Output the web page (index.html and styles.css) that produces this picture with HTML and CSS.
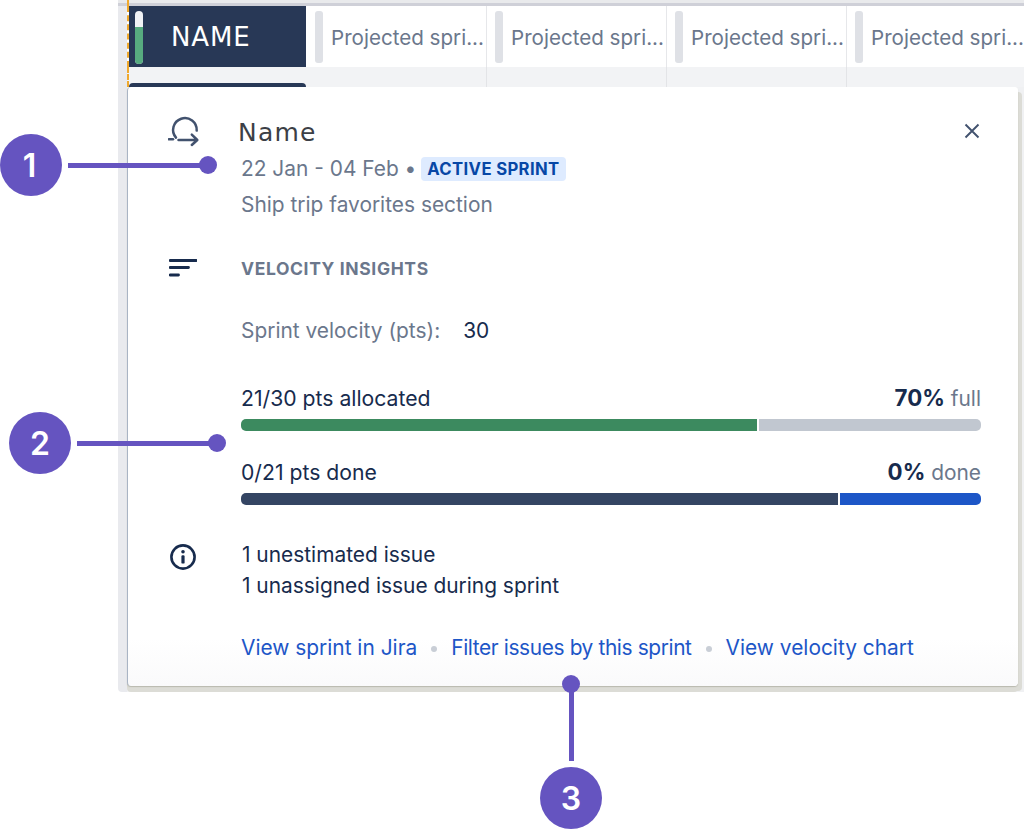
FILE: index.html
```html
<!DOCTYPE html>
<html lang="en">
<head>
<meta charset="utf-8">
<title>Sprint details</title>
<link rel="stylesheet" href="styles.css">
</head>
<body>
<div class="page">
  <div class="board">
    <div class="board-top"></div>
    <div class="row">
      <div class="cell-name">
        <span class="meter"><span class="meter-fill"></span></span>
        <span class="name-label">NAME</span>
      </div>
      <div class="cell"><span class="grip"></span><span class="cell-text">Projected spri...</span></div>
      <div class="cell"><span class="grip"></span><span class="cell-text">Projected spri...</span></div>
      <div class="cell"><span class="grip"></span><span class="cell-text">Projected spri...</span></div>
      <div class="cell cell-last"><span class="grip"></span><span class="cell-text">Projected spri...</span></div>
    </div>
    <div class="subrow">
      <div class="sub-name"><span class="next-name"></span></div>
      <div class="sub"></div>
      <div class="sub"></div>
      <div class="sub"></div>
      <div class="sub sub-last"></div>
    </div>

    <section class="popup">
      <div class="section head">
        <svg class="icon icon-sprint" viewBox="0 0 32 32" width="32" height="32" aria-hidden="true">
          <path d="M8 22.6 A11.8 11.8 0 1 1 28.7 15.6" fill="none" stroke="#42526e" stroke-width="2.5" stroke-linecap="round"/>
          <path d="M10.5 25 H29 M23.8 19.6 L29.3 25 L23.8 30" fill="none" stroke="#42526e" stroke-width="2.5" stroke-linecap="round" stroke-linejoin="round"/>
          <path d="M0.8 24.2 H5" fill="none" stroke="#42526e" stroke-width="2.5" stroke-linecap="round"/>
        </svg>
        <div class="body">
          <div class="title-row">
            <h2 class="title">Name</h2>
            <svg class="close" viewBox="0 0 16 16" width="16" height="16" aria-hidden="true">
              <path d="M1.5 1.5 L14.5 14.5 M14.5 1.5 L1.5 14.5" fill="none" stroke="#42526e" stroke-width="1.9"/>
            </svg>
          </div>
          <div class="dates">22 Jan - 04 Feb • <span class="badge">ACTIVE SPRINT</span></div>
          <div class="goal">Ship trip favorites section</div>
        </div>
      </div>

      <div class="section insights">
        <svg class="icon icon-filter" viewBox="0 0 28 20" width="28" height="20" aria-hidden="true">
          <path d="M1 1.5 H27.5 M1 8.5 H19.5 M1 16 H9.5" fill="none" stroke="#172b4d" stroke-width="2.8" stroke-linecap="round"/>
        </svg>
        <div class="body">
          <h3 class="overline">VELOCITY INSIGHTS</h3>
          <div class="velocity"><span class="muted">Sprint velocity (pts):</span><span class="velocity-value">30</span></div>
          <div class="metric metric-first">
            <div class="metric-label"><span class="metric-name">21/30 pts allocated</span><span class="muted"><b class="pct">70%</b> full</span></div>
            <div class="bar"><span class="seg seg-green"></span><span class="seg seg-grey"></span></div>
          </div>
          <div class="metric">
            <div class="metric-label"><span class="metric-name">0/21 pts done</span><span class="muted"><b class="pct">0%</b> done</span></div>
            <div class="bar"><span class="seg seg-navy"></span><span class="seg seg-blue"></span></div>
          </div>
        </div>
      </div>

      <div class="section notes">
        <svg class="icon icon-info" viewBox="0 0 28 28" width="28" height="28" aria-hidden="true">
          <circle cx="14" cy="14" r="11.6" fill="none" stroke="#172b4d" stroke-width="2.6"/>
          <circle cx="14" cy="8.8" r="1.8" fill="#172b4d"/>
          <rect x="12.4" y="12.2" width="3.2" height="8.4" rx="1.2" fill="#172b4d"/>
        </svg>
        <div class="body">
          <div>1 unestimated issue</div>
          <div class="note-second">1 unassigned issue during sprint</div>
          <div class="links">
            <a href="#">View sprint in Jira</a><span class="sep"></span><a class="link-tight" href="#">Filter issues by this sprint</a><span class="sep"></span><a href="#">View velocity chart</a>
          </div>
        </div>
      </div>
    </section>
  </div>

  <div class="callout callout-1"><span class="num">1</span><span class="line"></span><span class="dot"></span></div>
  <div class="callout callout-2"><span class="num">2</span><span class="line"></span><span class="dot"></span></div>
  <div class="callout callout-3"><span class="dot"></span><span class="line"></span><span class="num">3</span></div>
</div>
</body>
</html>
```
FILE: styles.css
```css
* { box-sizing: border-box; }
html, body { margin: 0; padding: 0; background: #fff; }
body { font-family: Inter, "Liberation Sans", sans-serif; color: #172b4d; }
.page { position: relative; width: 1024px; height: 829px; overflow: hidden; background: #fff; }

.board {
  position: relative;
  margin-left: 118px;
  height: 692px;
  background: #f0f1f3;
  border-radius: 0 0 0 4px;
  border-left: 9px solid #e9eaee;
}
.board::before {
  content: "";
  position: absolute;
  left: 0;
  top: 0;
  height: 6px;
  border-left: 2px dashed #f0a92e;
}
.board-top { height: 6px; background: #e9eaec; border-bottom: 3px solid #cfd0d8; margin-left: -9px; }
.row { display: flex; height: 61px; background: #fff; border-left: 2px dashed #f0a92e; }
.cell-name {
  width: 177px;
  margin-right: 1px;
  flex: none;
  display: flex;
  align-items: center;
  padding-left: 6px;
  background: #283856;
}
.meter {
  display: block;
  width: 8px;
  height: 53px;
  border-radius: 4px;
  background: #f1f2f5;
  overflow: hidden;
  position: relative;
  margin-top: 1px;
}
.meter-fill { position: absolute; left: 0; right: 0; bottom: 0; height: 37px; background: #57ab7f; }
.name-label { margin-left: 28px; font-family: "DejaVu Sans", sans-serif; color: #fff; font-size: 26px; letter-spacing: 0.9px; }
.cell {
  width: 180px;
  flex: none;
  display: flex;
  align-items: center;
  padding-left: 8px;
  border-right: 1px solid #e6e7ea;
  background: #fff;
}
.cell-last { border-right: 0; width: 175px; }
.grip { width: 8px; height: 52px; border-radius: 3px; background: #dfe1e6; flex: none; }
.cell-text { margin-left: 8px; margin-top: 2px; font-size: 20.6px; color: #6b778c; white-space: nowrap; }

.subrow { display: flex; height: 20px; background: #f2f3f5; border-left: 2px dashed #f0a92e; }
.sub-name { width: 178px; flex: none; display: flex; align-items: flex-end; }
.next-name { display: block; width: 177px; height: 4px; background: #283856; border-radius: 4px 4px 0 0; }
.sub { width: 180px; flex: none; border-right: 1px solid #e3e4e7; }
.sub-last { border-right: 0; width: 175px; }

.popup {
  position: absolute;
  left: 0;
  top: 87px;
  width: 891px;
  height: 599px;
  padding: 28px 37px 0 41px;
  background: #fff;
  border-left: 1px solid #a9b4c4;
  border-radius: 4px;
  box-shadow: 0 1px 1px rgba(120, 120, 100, 0.35), 0 6px 0 #dcdcd6, 4px 5px 0 #dcdcd6;
  background-image: linear-gradient(to bottom, #fff 92%, #fafafb 100%);
}

.section { display: flex; align-items: flex-start; }
.icon { flex: none; display: block; }
.body { flex: 1; min-width: 0; margin-left: 72px; font-size: 20.9px; }

.icon-sprint { margin-left: -1px; }
.head .body { margin-left: 41px; }
.title-row { display: flex; justify-content: space-between; align-items: center; height: 32px; }
.title { margin: 2px 0 0 -3px; font-family: "DejaVu Sans", sans-serif; font-weight: 400; font-size: 25px; letter-spacing: 1.2px; color: #3c3f46; }
.close { margin-right: 1px; }
.dates { margin-top: 7px; line-height: 30px; color: #6b778c; display: flex; align-items: center; white-space: pre; }
.badge {
  display: inline-block;
  margin-left: -1px;
  padding: 0 6px;
  height: 24px;
  line-height: 25px;
  border-radius: 4px;
  background: #deebff;
  color: #0747a6;
  font-size: 16.7px;
  font-weight: 700;
  letter-spacing: 0.35px;
}
.goal { margin-top: 6px; line-height: 30px; color: #6b778c; }

.insights { margin-top: 36px; }
.icon-filter { margin-top: 3px; }
.insights .body { margin-left: 44px; }
.overline { margin: 0; font-size: 17.5px; line-height: 26px; font-weight: 700; color: #6b778c; letter-spacing: 0.62px; }
.velocity { margin-top: 34px; line-height: 30px; display: flex; gap: 23px; }
.muted { color: #6b778c; }
.velocity-value { color: #172b4d; }

.metric-first { margin-top: 37px; }
.metric { margin-bottom: 26px; }
.metric:last-child { margin-bottom: 0; }
.metric-label { display: flex; justify-content: space-between; align-items: baseline; line-height: 30px; height: 30px; }
.metric-name { font-size: 21.2px; }
.pct { font-size: 22.3px; font-weight: 700; color: #172b4d; }
.bar { display: flex; gap: 2px; height: 12px; margin-top: 6px; }
.seg { display: block; height: 100%; }
.seg-green { width: 516px; background: #3c8a5f; border-radius: 5px 0 0 5px; }
.seg-grey { flex: 1; background: #c1c7d0; border-radius: 0 5px 5px 0; }
.seg-navy { width: 597px; background: #344563; border-radius: 5px 0 0 5px; }
.seg-blue { flex: 1; background: #1d56c7; border-radius: 0 5px 5px 0; }

.notes { margin-top: 35px; }
.icon-info { margin-top: 3px; }
.notes .body { margin-left: 45px; line-height: 30px; }
.note-second { margin-top: 1px; }
.links { display: flex; align-items: center; margin: 32px 0 0 -1px; white-space: nowrap; }
.links a { color: #1d56c7; text-decoration: none; }
.links .link-tight { letter-spacing: -0.39px; }
.sep { width: 6px; height: 6px; border-radius: 50%; background: #c9ced6; margin: 2px 14px 0; }

/* annotation callouts drawn over the screenshot */
.callout { position: absolute; display: flex; align-items: center; }
.num {
  flex: none;
  width: 62px;
  height: 62px;
  border-radius: 50%;
  background: #6554c0;
  color: #fff;
  font-size: 32px;
  font-weight: 600;
  display: flex;
  align-items: center;
  justify-content: center;
}
.line { display: block; background: #6554c0; flex: none; }
.dot { flex: none; width: 18px; height: 18px; border-radius: 50%; background: #6554c0; }
.callout-1 { left: 0; top: 134px; }
.callout-1 .num { padding-right: 3px; }
.callout-1 .line { width: 132px; height: 5px; margin-left: 6px; }
.callout-1 .dot { margin-left: -1px; }
.callout-2 { left: 9px; top: 412px; }
.callout-2 .line { width: 132px; height: 5px; margin-left: 6px; }
.callout-2 .dot { margin-left: -1px; }
.callout-3 { left: 540px; top: 675px; flex-direction: column; }
.callout-3 .line { width: 5px; height: 69px; margin-top: -1px; }
.callout-3 .num { margin-top: 6px; }
```
